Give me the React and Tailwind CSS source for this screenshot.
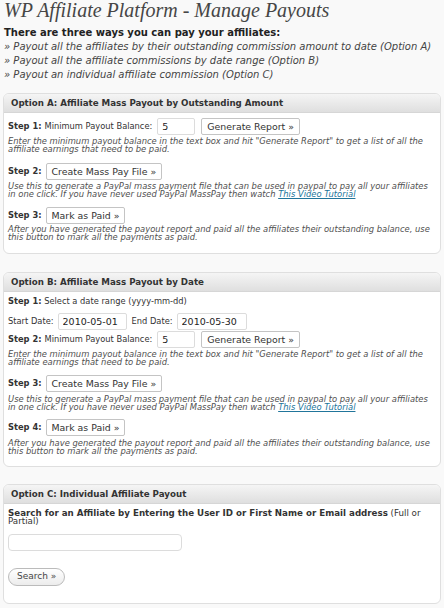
import React from 'react';

const sans = "font-['DejaVu_Sans','Liberation_Sans',sans-serif]";

function Btn({ children, className = '' }) {
  return (
    <button className={`h-[17px] px-[5px] border border-[#c4c4c4] rounded-[2px] bg-white text-[9.4px] leading-[15px] text-[#333] ${className}`}>
      {children}
    </button>
  );
}

function Field({ value = '', className = '' }) {
  return (
    <input readOnly value={value} className={`h-[17px] px-[4px] border border-[#dcdcdc] rounded-[2px] bg-white text-[9.5px] text-[#222] outline-none ${className}`} />
  );
}

function Note({ children, className = '' }) {
  return <p className={`text-[8.4px] leading-[8px] italic text-[#505050] ${className}`}>{children}</p>;
}

function Panel({ title, children, className = '' }) {
  return (
    <section className={`mx-[3px] border border-[#dfdfdf] rounded-[6px] bg-white overflow-hidden ${className}`}>
      <h3 className="h-[19px] px-[7px] bg-gradient-to-b from-[#f5f5f5] to-[#dfdfdf] border-b border-[#d6d6d6] text-[8.7px] leading-[18px] font-bold text-[#333]">
        {title}
      </h3>
      <div className="px-[4px]">{children}</div>
    </section>
  );
}

const Tutorial = () => <a className="underline text-[#21759b]">This Video Tutorial</a>;

export default function App() {
  return (
    <div className={`min-h-[608px] bg-[#f9f9f9] ${sans} text-[#333]`}>
      <h1 className="px-[4px] font-['Liberation_Serif',serif] italic text-[20px] leading-[20px] text-[#464646]">
        WP Affiliate Platform - Manage Payouts
      </h1>
      <div className="px-[4px] mt-[6px] text-[10px]">
        <p className="font-bold leading-[14px] text-[#222]">There are three ways you can pay your affiliates:</p>
        <p className="italic leading-[14px] text-[#444]">» Payout all the affiliates by their outstanding commission amount to date (Option A)</p>
        <p className="italic leading-[14px] text-[#444]">» Payout all the affiliate commissions by date range (Option B)</p>
        <p className="italic leading-[13px] text-[#444]">» Payout an individual affiliate commission (Option C)</p>
      </div>

      <Panel title="Option A: Affiliate Mass Payout by Outstanding Amount" className="mt-[12px]">
        <div className="flex items-center mt-[5px] text-[8.3px]">
          <b>Step 1:</b>
          <span className="ml-[3px]">Minimum Payout Balance:</span>
          <Field value="5" className="ml-[5px] w-[38px]" />
          <Btn className="ml-[6px]">Generate Report »</Btn>
        </div>
        <Note className="mt-[2px]">Enter the minimum payout balance in the text box and hit "Generate Report" to get a list of all the affiliate earnings that need to be paid.</Note>
        <div className="flex items-center mt-[10px] text-[8.3px]">
          <b>Step 2:</b>
          <Btn className="ml-[4px]">Create Mass Pay File »</Btn>
        </div>
        <Note className="mt-[2px]">Use this to generate a PayPal mass payment file that can be used in paypal to pay all your affiliates in one click. If you have never used PayPal MassPay then watch <Tutorial /></Note>
        <div className="flex items-center mt-[9px] text-[8.3px]">
          <b>Step 3:</b>
          <Btn className="ml-[4px]">Mark as Paid »</Btn>
        </div>
        <Note className="mt-[1px] mb-[12px]">After you have generated the payout report and paid all the affiliates their outstanding balance, use this button to mark all the payments as paid.</Note>
      </Panel>

      <Panel title="Option B: Affiliate Mass Payout by Date" className="mt-[18px]">
        <p className="mt-[3px] text-[8.3px] leading-[12px]"><b>Step 1:</b> Select a date range (yyyy-mm-dd)</p>
        <div className="flex items-center mt-[6px] text-[8.3px]">
          <span>Start Date:</span>
          <Field value="2010-05-01" className="ml-[4px] w-[69px]" />
          <span className="ml-[5px]">End Date:</span>
          <Field value="2010-05-30" className="ml-[4px] w-[70px]" />
        </div>
        <div className="flex items-center mt-[1px] text-[8.3px]">
          <b>Step 2:</b>
          <span className="ml-[3px]">Minimum Payout Balance:</span>
          <Field value="5" className="ml-[5px] w-[38px]" />
          <Btn className="ml-[6px]">Generate Report »</Btn>
        </div>
        <Note className="mt-[2px]">Enter the minimum payout balance in the text box and hit "Generate Report" to get a list of all the affiliate earnings that need to be paid.</Note>
        <div className="flex items-center mt-[9px] text-[8.3px]">
          <b>Step 3:</b>
          <Btn className="ml-[4px]">Create Mass Pay File »</Btn>
        </div>
        <Note className="mt-[3px]">Use this to generate a PayPal mass payment file that can be used in paypal to pay all your affiliates in one click. If you have never used PayPal MassPay then watch <Tutorial /></Note>
        <div className="flex items-center mt-[8px] text-[8.3px]">
          <b>Step 4:</b>
          <Btn className="ml-[4px]">Mark as Paid »</Btn>
        </div>
        <Note className="mt-[3px] mb-[11px]">After you have generated the payout report and paid all the affiliates their outstanding balance, use this button to mark all the payments as paid.</Note>
      </Panel>

      <Panel title="Option C: Individual Affiliate Payout" className="mt-[17px]">
        <p className="mt-[5px] text-[8.7px] leading-[8px]">
          <b>Search for an Affiliate by Entering the User ID or First Name or Email address</b> (Full or<br />Partial)
        </p>
        <Field className="mt-[9px] w-[174px] rounded-[4px] block" />
        <button className="block mt-[17px] mb-[17px] h-[18px] px-[8px] rounded-full border border-[#bbb] bg-gradient-to-b from-white to-[#ececec] text-[9px] text-[#464646]">
          Search »
        </button>
      </Panel>
    </div>
  );
}
